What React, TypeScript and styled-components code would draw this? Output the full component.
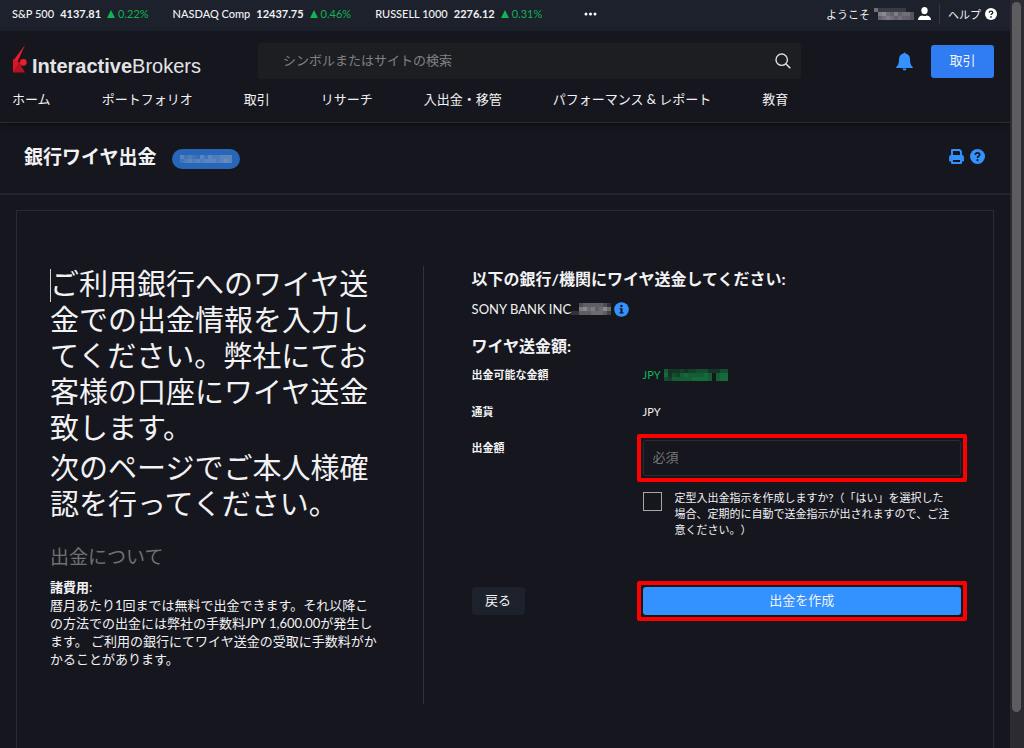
import React from "react";
import styled, { createGlobalStyle } from "styled-components";

const color = {
  bg: "#16171e",
  ticker: "#1c212b",
  field: "#1d1e22",
  line: "#292a33",
  text: "#f2f2f4",
  muted: "#77777b",
  green: "#10b453",
  blue: "#3392ff",
  alert: "#ff0000",
};

const GlobalStyle = createGlobalStyle`
  *, *::before, *::after { box-sizing: border-box; }
  body {
    margin: 0;
    background: ${color.bg};
    color: ${color.text};
    font-family: Lato, "Noto Sans CJK JP", sans-serif;
    font-size: 13px;
    text-spacing-trim: space-all;
  }
  h1, h2, h3, p { margin: 0; }
  button, input { font: inherit; color: inherit; }
  a { color: inherit; text-decoration: none; }
`;

const Shell = styled.div`
  display: grid;
  grid-template-columns: minmax(0, 1fr) 14px;
  min-height: 100vh;
`;

const Page = styled.div`
  display: flex;
  flex-direction: column;
`;

const ScrollTrack = styled.div`
  background: #2b2b31;
  padding: 2px 3px 36px 2px;
  display: flex;
`;

const ScrollThumb = styled.div`
  flex: 1;
  border-radius: 5px;
  background: #5d5d61;
`;

const TickerBar = styled.div`
  display: flex;
  align-items: center;
  height: 31px;
  padding: 0 13px 4px 12px;
  background: ${color.ticker};
  font-size: 11px;
  white-space: nowrap;
`;

const Quote = styled.div`
  display: flex;
  align-items: center;
  gap: 6px;
  margin-right: 24px;
`;

const QuoteName = styled.span`
  font-weight: 500;
`;

const Change = styled.span`
  display: flex;
  align-items: center;
  gap: 3px;
  color: ${color.green};
`;

const PlainButton = styled.button`
  display: inline-flex;
  align-items: center;
  padding: 0;
  border: 0;
  background: none;
`;

const MoreButton = styled(PlainButton)`
  margin-left: 18px;
`;

const Account = styled.div`
  display: flex;
  align-items: center;
  margin-left: auto;
`;

const AccountLink = styled.a`
  display: flex;
  align-items: center;
  gap: 4px;
`;

const AccountRule = styled.span`
  width: 1px;
  height: 20px;
  margin: 0 8px;
  background: #343844;
`;

const Header = styled.header`
  border-bottom: 1px solid ${color.line};
  box-shadow: 0 2px 4px #0e0f14;
`;

const HeaderTop = styled.div`
  display: flex;
  align-items: center;
  padding: 12px 16px 0 12px;
`;

const Logo = styled.a`
  display: flex;
  align-items: baseline;
  flex: 0 0 246px;
  gap: 5px;
  font: 20px/22px "Liberation Sans", sans-serif;
  color: #e4e4e6;
`;

const SearchBox = styled.form`
  display: flex;
  align-items: center;
  flex: 1 1 543px;
  height: 36px;
  padding: 0 10px 0 25px;
  border-radius: 3px;
  background: ${color.field};
`;

const SearchInput = styled.input`
  flex: 1;
  min-width: 0;
  padding: 0 0 2px;
  border: 0;
  outline: 0;
  background: none;
  &::placeholder { color: #808084; opacity: 1; }
`;

const HeaderActions = styled.div`
  display: flex;
  align-items: center;
  justify-content: flex-end;
  flex: 0 0 193px;
  gap: 18px;
`;

const TradeButton = styled.button`
  width: 63px;
  height: 33px;
  padding: 0 0 4px;
  border: 0;
  border-radius: 3px;
  background: #307df3;
`;

const Nav = styled.nav`
  display: flex;
  gap: 51px;
  padding: 10px 12px 13px;
  line-height: 20px;
  white-space: nowrap;
`;

const TitleBar = styled.div`
  display: flex;
  align-items: center;
  height: 72px;
  padding: 0 25px 2px 24px;
  border-bottom: 2px solid #22232b;
`;

const Title = styled.h1`
  font-size: 19px;
  line-height: 28px;
  font-weight: 700;
`;

const AccountPill = styled.span`
  display: flex;
  align-items: center;
  justify-content: center;
  width: 68px;
  height: 20px;
  margin: 4px 0 0 16px;
  border-radius: 10px;
  background: #2766b8;
`;

const TitleActions = styled.div`
  display: flex;
  gap: 6px;
  margin-left: auto;
  padding-bottom: 2px;
`;

const Card = styled.main`
  flex: 1;
  margin: 15px 16px 0;
  padding: 55px 32px 44px 33px;
  border: 1px solid ${color.line};
  border-bottom: 0;
`;

const Columns = styled.div`
  display: grid;
  grid-template-columns: 374fr 538fr;
  min-height: 438px;
`;

const Intro = styled.section`
  padding-right: 43px;
  border-right: 1px solid #30313a;
`;

const Lead = styled.p`
  position: relative;
  margin-bottom: 4px;
  font-size: 29px;
  line-height: 36px;
`;

const Caret = styled.span`
  position: absolute;
  top: 3px;
  left: 0;
  width: 1px;
  height: 33px;
  background: #d0d0d0;
`;

const AboutTitle = styled.h2`
  margin: 23px 0 9px;
  font-size: 19px;
  line-height: 24px;
  font-weight: 400;
  color: #707072;
`;

const Fees = styled.p`
  line-height: 18px;
`;

const Form = styled.form`
  padding: 1px 0 0 48px;
`;

const FormTitle = styled.h3`
  font-size: 16px;
  line-height: 24px;
  font-weight: 700;
`;

const Bank = styled.p`
  display: flex;
  align-items: center;
  margin: 9px 0 16px;
  line-height: 18px;
`;

const InfoButton = styled(PlainButton)`
  margin-left: 3px;
`;

const Row = styled.div<{ $top: number }>`
  display: grid;
  grid-template-columns: 171px minmax(0, 1fr);
  align-items: start;
  margin-top: ${(p) => p.$top}px;
  font-size: 11px;
  line-height: 16px;
`;

const Label = styled.label`
  font-weight: 700;
`;

const Value = styled.output<{ $green?: boolean }>`
  display: flex;
  align-items: center;
  gap: 3px;
  color: ${(p) => (p.$green ? color.green : color.text)};
`;

const Highlight = styled.div`
  position: relative;
  display: flex;
  &::after {
    content: "";
    position: absolute;
    inset: -6px;
    border: 4px solid ${color.alert};
    border-radius: 2px;
    pointer-events: none;
  }
`;

const AmountInput = styled.input`
  width: 100%;
  height: 36px;
  padding: 0 9px 2px;
  border: 1px solid #2a2b32;
  border-radius: 3px;
  background: none;
  font-size: 13px;
  &::placeholder { color: ${color.muted}; opacity: 1; }
`;

const CheckRow = styled.div`
  display: flex;
  gap: 13px;
`;

const Checkbox = styled.input`
  appearance: none;
  flex: none;
  width: 19px;
  height: 19px;
  margin: 2px 0 0;
  border: 1px solid #aaa69f;
`;

const CheckLabel = styled.label`
  max-width: 276px;
`;

const BackButton = styled.button`
  justify-self: start;
  width: 53px;
  height: 28px;
  padding: 0 0 2px;
  border: 0;
  border-radius: 4px;
  background: ${color.ticker};
  font-size: 13px;
`;

const SubmitButton = styled.button`
  width: 100%;
  height: 28px;
  padding: 0 0 2px;
  border: 0;
  border-radius: 3px;
  background: ${color.blue};
  font-size: 13px;
`;

const quotes = [
  { name: "S&P 500", price: "4137.81", change: "0.22%" },
  { name: "NASDAQ Comp", price: "12437.75", change: "0.46%" },
  { name: "RUSSELL 1000", price: "2276.12", change: "0.31%" },
];

const menu = ["ホーム", "ポートフォリオ", "取引", "リサーチ", "入出金・移管", "パフォーマンス & レポート", "教育"];

/* Masked private value: each digit is the opacity of one square, rows separated by spaces. */
function Mosaic({ rows, fill, cell = 4 }: { rows: string; fill: string; cell?: number }) {
  const lines = rows.split(" ");
  return (
    <svg width={lines[0].length * cell} height={lines.length * cell} shapeRendering="crispEdges" aria-hidden="true">
      {lines.map((line, y) =>
        line.split("").map((v, x) => (
          <rect key={`${x}-${y}`} x={x * cell} y={y * cell} width={cell} height={cell} fill={fill} opacity={Number(v) / 10} />
        ))
      )}
    </svg>
  );
}

const LogoMark = () => (
  <svg width="15" height="28" viewBox="0 0 15 28" aria-hidden="true">
    <path d="M13 0 1 16v11Z" fill="#ec1c2c" />
    <path d="M1 14v13.500L8 18Z" fill="#dc1526" />
    <path d="M1 27.500 7 17l6 10.500Z" fill="#b5121f" />
    <circle cx="11.300" cy="17.300" r="3.400" fill="#ee1d2d" />
  </svg>
);

const QuestionIcon = ({ size, fill, mark }: { size: number; fill: string; mark: string }) => (
  <svg width={size} height={size} viewBox="0 0 14 14" aria-hidden="true">
    <circle cx="7" cy="7" r="7" fill={fill} />
    <path d="M4.900 5.500c.1-1.300 1-1.900 2.100-1.900s2.100.7 2.100 1.800C9.100 6.800 7 6.800 7 8.300" fill="none" stroke={mark} strokeWidth="1.500" />
    <circle cx="7" cy="10.400" r="1" fill={mark} />
  </svg>
);

const UserIcon = () => (
  <svg width="13" height="13" viewBox="0 0 13 13" fill="#fff" aria-hidden="true">
    <ellipse cx="6.500" cy="3.600" rx="3.200" ry="3.600" />
    <path d="M0 13c0-3 1.500-4 4.300-4.600q2.200 1.300 4.400 0C11.500 9 13 10 13 13Z" />
  </svg>
);

const SearchIcon = () => (
  <svg width="16" height="16" viewBox="0 0 16 16" fill="none" stroke="#dededf" aria-hidden="true">
    <circle cx="6.700" cy="6.700" r="5.700" strokeWidth="1.400" />
    <path d="m10.800 10.800 4.500 4.500" strokeWidth="1.600" />
  </svg>
);

const BellIcon = () => (
  <svg width="17" height="19" viewBox="0 0 17 19" fill={color.blue} aria-hidden="true">
    <path d="M7.500 1.500a1 1 0 0 1 2 0C12.500 2 14 4.300 14 7.500c0 4 .7 5.800 2.800 7.500v1H.2v-1C2.300 13.300 3 11.500 3 7.500 3 4.300 4.500 2 7.500 1.500Z" />
    <path d="M6.500 16.500h4a2 2 0 0 1-4 0Z" />
  </svg>
);

const PrintIcon = () => (
  <svg width="15" height="15" viewBox="0 0 15 15" fill="none" stroke={color.blue} strokeWidth="1.900" strokeLinejoin="round" aria-hidden="true">
    <path d="M3 7V1h7.500L12 2.500V7" />
    <path d="M3 11.500H1V8.300Q1 7 2.300 7h10.400Q14 7 14 8.300v3.200h-2" />
    <path d="M1.500 8.300h12" />
    <path d="M3 10h9v4H3Z" />
  </svg>
);

const InfoIcon = () => (
  <svg width="15" height="15" viewBox="0 0 15 15" aria-hidden="true">
    <circle cx="7.500" cy="7.500" r="7.300" fill={color.blue} />
    <circle cx="7.400" cy="4" r="1.200" fill={color.bg} />
    <path d="M5.700 6.200h2.800v4h1v1.300h-4v-1.300h1V7.500h-.8Z" fill={color.bg} />
  </svg>
);

export default function App() {
  return (
    <Shell>
      <GlobalStyle />
      <Page>
        <TickerBar>
          {quotes.map((q) => (
            <Quote key={q.name}>
              <QuoteName>{q.name}</QuoteName>
              <strong>{q.price}</strong>
              <Change>
                <svg width="8" height="8" viewBox="0 0 8 8" aria-hidden="true">
                  <path d="M4 0 8 8H0Z" fill={color.green} />
                </svg>
                {q.change}
              </Change>
            </Quote>
          ))}
          <MoreButton type="button" aria-label="その他の指数">
            <svg width="13" height="4" viewBox="0 0 13 4" fill="#fff" aria-hidden="true">
              <circle cx="2" cy="2" r="1.500" />
              <circle cx="6.500" cy="2" r="1.500" />
              <circle cx="11" cy="2" r="1.500" />
            </svg>
          </MoreButton>
          <Account>
            <AccountLink href="#account">
              ようこそ
              <Mosaic rows="6222222200 0786575664 0567656554" fill="#a9a4ab" />
              <UserIcon />
            </AccountLink>
            <AccountRule />
            <AccountLink href="#help">
              ヘルプ
              <QuestionIcon size={12} fill="#fff" mark="#1c212b" />
            </AccountLink>
          </Account>
        </TickerBar>

        <Header>
          <HeaderTop>
            <Logo href="#home">
              <LogoMark />
              <span><b>Interactive</b>Brokers</span>
            </Logo>
            <SearchBox role="search">
              <SearchInput type="text" aria-label="検索" placeholder="シンボルまたはサイトの検索" />
              <PlainButton type="button" aria-label="検索する"><SearchIcon /></PlainButton>
            </SearchBox>
            <HeaderActions>
              <PlainButton type="button" aria-label="通知"><BellIcon /></PlainButton>
              <TradeButton type="button">取引</TradeButton>
            </HeaderActions>
          </HeaderTop>
          <Nav>
            {menu.map((item) => <a key={item} href="#menu">{item}</a>)}
          </Nav>
        </Header>

        <TitleBar>
          <Title>銀行ワイヤ出金</Title>
          <AccountPill>
            <Mosaic rows="4232142433444 2343434443454" fill="#a9b4c4" />
          </AccountPill>
          <TitleActions>
            <PlainButton type="button" aria-label="印刷"><PrintIcon /></PlainButton>
            <PlainButton type="button" aria-label="ヘルプ">
              <QuestionIcon size={15} fill={color.blue} mark={color.bg} />
            </PlainButton>
          </TitleActions>
        </TitleBar>

        <Card>
          <Columns>
            <Intro>
              <Lead><Caret />ご利用銀行へのワイヤ送金での出金情報を入力してください。弊社にてお客様の口座にワイヤ送金致します。</Lead>
              <Lead>次のページでご本人様確認を行ってください。</Lead>
              <AboutTitle>出金について</AboutTitle>
              <Fees>
                <strong>諸費用</strong>:<br />
                暦月あたり1回までは無料で出金できます。それ以降この方法での出金には弊社の手数料JPY 1,600.00が発生します。 ご利用の銀行にてワイヤ送金の受取に手数料がかかることがあります。
              </Fees>
            </Intro>

            <Form>
              <FormTitle>以下の銀行/機関にワイヤ送金してください:</FormTitle>
              <Bank>
                SONY BANK INC
                <Mosaic rows="0045555542 0078675686 2255566653" fill="#a8a5aa" />
                <InfoButton type="button" aria-label="銀行情報"><InfoIcon /></InfoButton>
              </Bank>
              <FormTitle>ワイヤ送金額:</FormTitle>
              <Row $top={9}>
                <Label htmlFor="available">出金可能な金額</Label>
                <Value id="available" $green>
                  JPY
                  <Mosaic rows="5222323344422244 6243565555650566 4355555666650566" fill="#12a34c" />
                </Value>
              </Row>
              <Row $top={21}>
                <Label htmlFor="currency">通貨</Label>
                <Value id="currency">JPY</Value>
              </Row>
              <Row $top={20}>
                <Label htmlFor="amount">出金額</Label>
                <Highlight>
                  <AmountInput id="amount" type="text" placeholder="必須" />
                </Highlight>
              </Row>
              <Row $top={14}>
                <span />
                <CheckRow>
                  <Checkbox id="recurring" type="checkbox" />
                  <CheckLabel htmlFor="recurring">
                    定型入出金指示を作成しますか?（「はい」を選択した場合、定期的に自動で送金指示が出されますので、ご注意ください。）
                  </CheckLabel>
                </CheckRow>
              </Row>
              <Row $top={49}>
                <BackButton type="button">戻る</BackButton>
                <Highlight>
                  <SubmitButton type="submit">出金を作成</SubmitButton>
                </Highlight>
              </Row>
            </Form>
          </Columns>
        </Card>
      </Page>
      <ScrollTrack>
        <ScrollThumb />
      </ScrollTrack>
    </Shell>
  );
}
